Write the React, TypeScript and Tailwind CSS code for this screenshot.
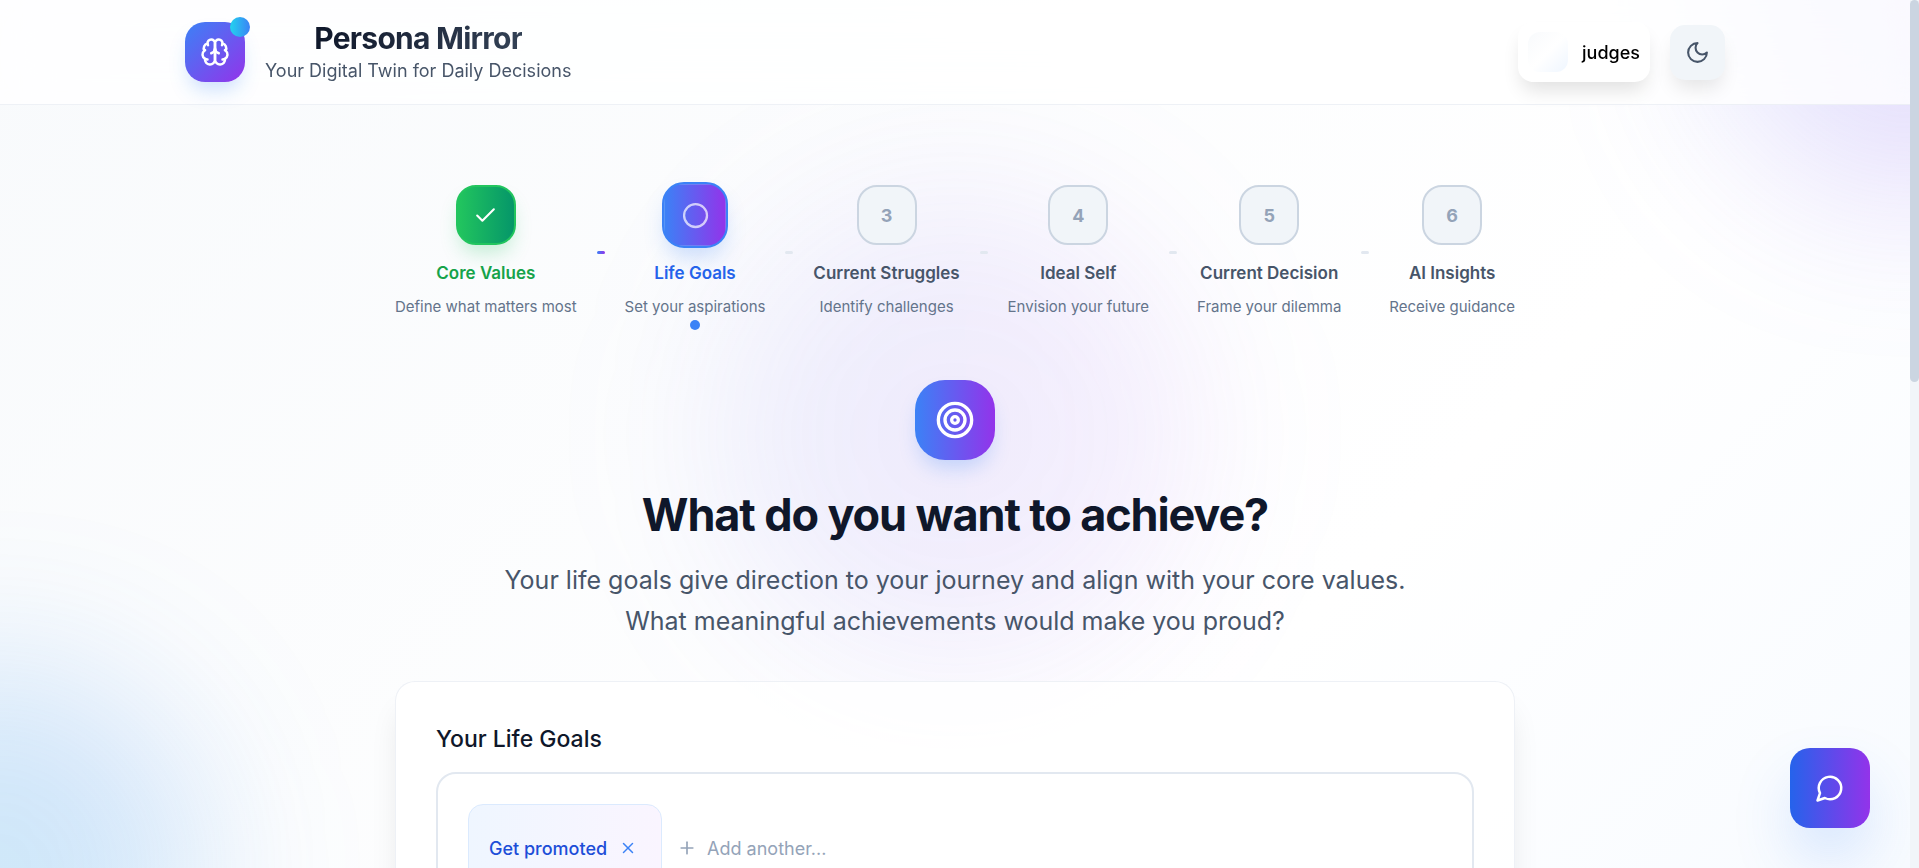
import { Check, Circle, Plus, Target, X } from "lucide-react";

type Status = "done" | "active" | "todo";

const steps: { title: string; hint: string; status: Status }[] = [
  { title: "Core Values", hint: "Define what matters most", status: "done" },
  { title: "Life Goals", hint: "Set your aspirations", status: "active" },
  { title: "Current Struggles", hint: "Identify challenges", status: "todo" },
  { title: "Ideal Self", hint: "Envision your future", status: "todo" },
  { title: "Current Decision", hint: "Frame your dilemma", status: "todo" },
  { title: "AI Insights", hint: "Receive guidance", status: "todo" },
];

const badgeStyle: Record<Status, string> = {
  done: "border-[#22c55e] bg-linear-to-r/srgb from-[#22c55e] to-[#059669] shadow-[0_12px_19px_-4px_rgba(34,197,94,0.25)]",
  active:
    "scale-110 border-[#3b82f6] bg-linear-to-r/srgb from-[#3b82f6] to-[#9333ea] shadow-[0_12px_19px_-4px_rgba(59,130,246,0.25)]",
  todo: "border-[#cbd5e1] bg-[#f1f5f9]",
};

const titleStyle: Record<Status, string> = {
  done: "text-[#16a34a]",
  active: "text-[#2563eb]",
  todo: "text-[#475569]",
};

function BrainIcon() {
  return (
    <svg
      viewBox="0 0 24 24"
      className="size-[30px]"
      fill="none"
      stroke="currentColor"
      strokeWidth="2"
      strokeLinecap="round"
      strokeLinejoin="round"
      aria-hidden="true"
    >
      <path d="M12 5a3 3 0 1 0-5.997.125 4 4 0 0 0-2.526 5.77 4 4 0 0 0 .556 6.588A4 4 0 1 0 12 18Z" />
      <path d="M12 5a3 3 0 1 1 5.997.125 4 4 0 0 1 2.526 5.77 4 4 0 0 1-.556 6.588A4 4 0 1 1 12 18Z" />
      <path d="M15 13a4.500 4.500 0 0 1-3-4 4.500 4.500 0 0 1-3 4" />
      <path d="M17.599 6.500a3 3 0 0 0 .399-1.375" />
      <path d="M6.003 5.125A3 3 0 0 0 6.401 6.500" />
      <path d="M3.477 10.896a4 4 0 0 1 .585-.396" />
      <path d="M19.938 10.500a4 4 0 0 1 .585.396" />
      <path d="M6 18a4 4 0 0 1-1.967-.516" />
      <path d="M19.967 17.484A4 4 0 0 1 18 18" />
    </svg>
  );
}

function MoonIcon() {
  return (
    <svg
      viewBox="0 0 24 24"
      className="size-[25px]"
      fill="none"
      stroke="currentColor"
      strokeWidth="2"
      strokeLinecap="round"
      strokeLinejoin="round"
      aria-hidden="true"
    >
      <path d="M12 3a6 6 0 0 0 9 9 9 9 0 1 1-9-9Z" />
    </svg>
  );
}

function ChatIcon() {
  return (
    <svg
      viewBox="0 0 24 24"
      className="size-[30px]"
      fill="none"
      stroke="currentColor"
      strokeWidth="2"
      strokeLinecap="round"
      strokeLinejoin="round"
      aria-hidden="true"
    >
      <path d="M7.900 20A9 9 0 1 0 4 16.100L2 22Z" />
    </svg>
  );
}

function Backdrop() {
  return (
    <div className="pointer-events-none absolute inset-0 overflow-hidden" aria-hidden="true">
      <div className="absolute inset-x-0 top-0 h-[227%] bg-linear-to-br/srgb from-[#f8fafc] via-white to-[#eff6ff]" />
      <div className="absolute -top-50 -right-50 size-100 rounded-full bg-linear-to-br/srgb from-[#60a5fa]/20 to-[#9333ea]/20 blur-[80px]" />
      <div className="absolute -bottom-50 -left-50 size-100 rounded-full bg-linear-to-tr/srgb from-[#22d3ee]/20 to-[#2563eb]/20 blur-[80px]" />
      <div className="absolute top-1/2 left-1/2 size-120 -translate-1/2 rounded-full bg-linear-to-r/srgb from-[#6366f1]/10 to-[#a855f7]/10 blur-[80px]" />
    </div>
  );
}

function Header() {
  return (
    <header className="relative z-10 border-b border-[#e2e8f0]/60 bg-white/80 backdrop-blur-xl">
      <div className="mx-auto flex h-26 max-w-[1600px] items-center justify-between px-[30px]">
        <div className="flex items-center gap-5">
          <div className="relative flex size-15 items-center justify-center rounded-[20px] bg-linear-to-br/srgb from-[#3b82f6] to-[#9333ea] text-white shadow-[0_12px_19px_-4px_rgba(59,130,246,0.25)]">
            <BrainIcon />
            <span className="absolute -top-[5px] -right-[5px] size-5 rounded-full bg-linear-to-r/srgb from-[#22d3ee] to-[#3b82f6]" />
          </div>
          <div className="flex flex-col items-center">
            <h1 className="bg-linear-to-r/srgb from-[#0f172a] to-[#334155] bg-clip-text text-[30px] leading-[38px] font-bold tracking-tight text-transparent">
              Persona Mirror
            </h1>
            <p className="text-[18px] leading-[28px] text-[#475569]">
              Your Digital Twin for Daily Decisions
            </p>
          </div>
        </div>
        <div className="flex items-center gap-5">
          <button
            type="button"
            className="flex h-15 items-center gap-[14px] rounded-[15px] bg-white px-[10px] text-[18px] font-medium text-black shadow-[0_12px_19px_-4px_rgba(0,0,0,0.12)]"
          >
            <span className="size-10 rounded-[12px] bg-linear-to-br/srgb from-[#f8fafc] via-white to-[#eff6ff]" />
            judges
          </button>
          <button
            type="button"
            aria-label="Switch to dark theme"
            className="flex size-[55px] items-center justify-center rounded-[15px] bg-[#f1f5f9] text-[#475569] shadow-[0_12px_19px_-4px_rgba(0,0,0,0.1)]"
          >
            <MoonIcon />
          </button>
        </div>
      </div>
    </header>
  );
}

function StepBadge({ status, number }: { status: Status; number: number }) {
  return (
    <span
      className={`flex size-15 items-center justify-center rounded-[20px] border-2 text-[18px] font-bold text-[#94a3b8] ${badgeStyle[status]}`}
    >
      {status === "done" && <Check className="size-[25px] text-white" />}
      {status === "active" && <Circle className="size-[25px] text-white/70" />}
      {status === "todo" && number}
    </span>
  );
}

function Stepper() {
  return (
    <ol className="flex items-center">
      {steps.map((step, i) => (
        <li key={step.title} className={i > 0 ? "flex flex-auto items-center" : "flex items-center"}>
          {i > 0 && (
            <span
              className={`mx-5 h-[3px] flex-1 rounded-full ${
                i === 1 ? "bg-linear-to-r/srgb from-[#3b82f6] to-[#9333ea]" : "bg-[#e2e8f0]"
              }`}
            />
          )}
          <div className="relative flex flex-col items-center">
            <StepBadge status={step.status} number={i + 1} />
            <span
              className={`mt-[15px] text-[17px] leading-[26px] font-semibold whitespace-nowrap ${titleStyle[step.status]}`}
            >
              {step.title}
            </span>
            <span className="mt-2 pb-px text-[15px] leading-[25px] whitespace-nowrap text-[#64748b]">
              {step.hint}
            </span>
            {step.status === "active" && (
              <span className="absolute -bottom-[10px] size-[10px] rounded-full bg-[#3b82f6]" />
            )}
          </div>
        </li>
      ))}
    </ol>
  );
}

function Intro() {
  return (
    <section className="mt-15 flex flex-col items-center text-center">
      <div className="flex size-20 items-center justify-center rounded-[30px] bg-linear-to-r/srgb from-[#3b82f6] to-[#9333ea] text-white shadow-[0_12px_19px_-4px_rgba(59,130,246,0.25)]">
        <Target className="size-10" />
      </div>
      <h2 className="mt-[30px] text-[45px] leading-[50px] font-bold tracking-tight text-[#0f172a]">
        What do you want to achieve?
      </h2>
      <p className="mt-5 max-w-[960px] text-[25px] leading-[41px] text-[#475569]">
        Your life goals give direction to your journey and align with your core values. What
        meaningful achievements would make you proud?
      </p>
    </section>
  );
}

function GoalsCard() {
  return (
    <section className="mt-[39px] rounded-[20px] border border-[#e2e8f0]/60 bg-white/80 p-10 shadow-[0_25px_31px_-6px_rgba(0,0,0,0.1)]">
      <label htmlFor="goal" className="block text-[23px] leading-[35px] font-medium text-[#0f172a]">
        Your Life Goals
      </label>
      <div className="mt-[15px] flex min-h-[180px] flex-wrap items-start gap-[15px] rounded-[20px] border-2 border-[#e2e8f0] bg-white p-[30px]">
        <div className="flex h-22 items-center gap-3 rounded-[15px] border border-[#dbeafe] bg-linear-to-r/srgb from-[#eff6ff] to-[#faf5ff] pr-6 pl-5 text-[18px] font-medium text-[#1d4ed8]">
          Get promoted
          <button type="button" aria-label="Remove Get promoted" className="text-[#3b82f6]">
            <X className="size-[18px]" />
          </button>
        </div>
        <div className="flex h-22 items-center gap-[10px] text-[#94a3b8]">
          <Plus className="size-5" />
          <input
            id="goal"
            type="text"
            placeholder="Add another..."
            className="w-60 bg-transparent text-[18px] outline-none placeholder:text-[#94a3b8]"
          />
        </div>
      </div>
    </section>
  );
}

export default function App() {
  return (
    <div className="flex h-screen overflow-hidden font-['Inter',sans-serif]">
      <div className="relative min-w-0 flex-1 overflow-hidden">
        <Backdrop />
        <Header />
        <main className="relative mx-auto max-w-[1120px] pt-20">
          <Stepper />
          <Intro />
          <GoalsCard />
        </main>
        <button
          type="button"
          aria-label="Open chat"
          className="absolute right-10 bottom-10 z-20 flex size-20 items-center justify-center rounded-[20px] bg-linear-to-r/srgb from-[#2563eb] to-[#9333ea] text-white shadow-[0_31px_62px_-8px_rgba(59,130,246,0.25)]"
        >
          <ChatIcon />
        </button>
      </div>
      <div className="w-[9px] bg-[#f1f5f9]" aria-hidden="true">
        <div className="h-[44%] rounded-full bg-[#cbd5e1]" />
      </div>
    </div>
  );
}
